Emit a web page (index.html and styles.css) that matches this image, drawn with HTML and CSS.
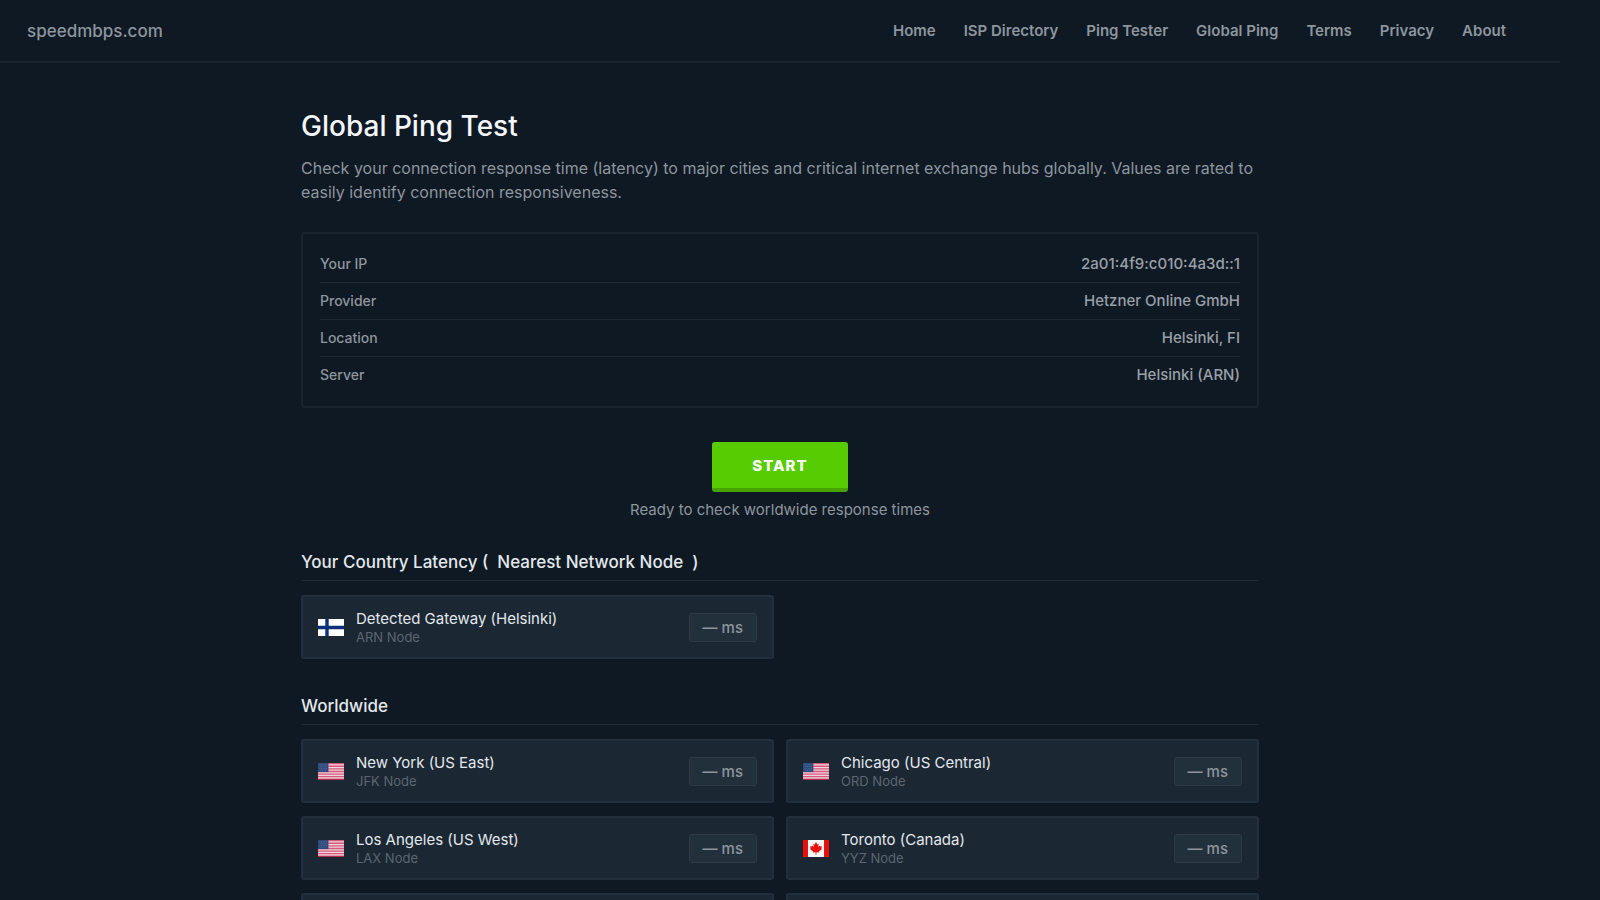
FILE: index.html
```html
<!DOCTYPE html>
<html lang="en">
<head>
  <meta charset="UTF-8">
  <meta name="viewport" content="width=device-width, initial-scale=1.0">
  <title>Global Ping Test</title>
  <link rel="stylesheet" href="styles.css">
</head>
<body>
  <!-- flag shapes, reused by the cards -->
  <svg class="sprite" aria-hidden="true">
    <symbol id="flag-fi" viewBox="0 0 26 17">
      <rect width="26" height="17" fill="#fff"/>
      <path d="M0 8.5h26M9 0v17" stroke="#0b2f78" stroke-width="3.4"/>
    </symbol>
    <symbol id="flag-us" viewBox="0 0 26 17">
      <rect width="26" height="17" fill="#f3d3dd"/>
      <path d="M0 .65h26M0 3.25h26M0 5.85h26M0 8.5h26M0 11.1h26M0 13.7h26" stroke="#d4597a" stroke-width="1.3"/>
      <path d="M0 16.35h26" stroke="#b02a4c" stroke-width="1.3"/>
      <rect width="10.4" height="9.1" fill="#2f4a7d"/>
      <path d="M1.5 1.8h8M2.5 3.6h6M1.5 5.4h8M2.5 7.2h6" stroke="#6f86b0" stroke-width=".7" stroke-dasharray=".7 1"/>
    </symbol>
    <symbol id="flag-ca" viewBox="0 0 26 17">
      <rect width="26" height="17" fill="#fff"/>
      <path d="M0 0h5v17H0zM21 0h5v17h-5z" fill="#e8110f"/>
      <path d="M13 2l1.3 2.4 1.4-.7-.5 3.4 1.7-1.6.4 1 1.7-.2-.7 2 .8.6-3.2 2.5.3 1.2-2.8-.4V15h-.8v-2.8l-2.8.4.3-1.2-3.2-2.5.8-.6-.7-2 1.7.2.4-1 1.7 1.6-.5-3.4 1.4.7z" fill="#e8110f"/>
    </symbol>
  </svg>

  <header class="header">
    <a class="logo" href="#">speedmbps.com</a>
    <nav class="nav">
      <a href="#">Home</a>
      <a href="#">ISP Directory</a>
      <a href="#">Ping Tester</a>
      <a href="#">Global Ping</a>
      <a href="#">Terms</a>
      <a href="#">Privacy</a>
      <a href="#">About</a>
    </nav>
  </header>

  <main class="container">
    <h1>Global Ping Test</h1>
    <p class="intro">Check your connection response time (latency) to major cities and critical internet exchange hubs globally. Values are rated to easily identify connection responsiveness.</p>

    <dl class="info">
      <div class="info-row"><dt>Your IP</dt><dd>2a01:4f9:c010:4a3d::1</dd></div>
      <div class="info-row"><dt>Provider</dt><dd>Hetzner Online GmbH</dd></div>
      <div class="info-row"><dt>Location</dt><dd>Helsinki, FI</dd></div>
      <div class="info-row"><dt>Server</dt><dd>Helsinki (ARN)</dd></div>
    </dl>

    <div class="actions">
      <button class="start" type="button">START</button>
      <p class="status">Ready to check worldwide response times</p>
    </div>

    <section>
      <h2>Your Country Latency (&nbsp; Nearest Network Node &nbsp;)</h2>
      <div class="grid">
        <div class="card">
          <svg class="flag"><use href="#flag-fi"/></svg>
          <div class="place"><h3>Detected Gateway (Helsinki)</h3><p>ARN Node</p></div>
          <span class="ping">— ms</span>
        </div>
      </div>
    </section>

    <section>
      <h2>Worldwide</h2>
      <div class="grid">
        <div class="card">
          <svg class="flag"><use href="#flag-us"/></svg>
          <div class="place"><h3>New York (US East)</h3><p>JFK Node</p></div>
          <span class="ping">— ms</span>
        </div>
        <div class="card">
          <svg class="flag"><use href="#flag-us"/></svg>
          <div class="place"><h3>Chicago (US Central)</h3><p>ORD Node</p></div>
          <span class="ping">— ms</span>
        </div>
        <div class="card">
          <svg class="flag"><use href="#flag-us"/></svg>
          <div class="place"><h3>Los Angeles (US West)</h3><p>LAX Node</p></div>
          <span class="ping">— ms</span>
        </div>
        <div class="card">
          <svg class="flag"><use href="#flag-ca"/></svg>
          <div class="place"><h3>Toronto (Canada)</h3><p>YYZ Node</p></div>
          <span class="ping">— ms</span>
        </div>
        <div class="card"></div>
        <div class="card"></div>
      </div>
    </section>
  </main>
</body>
</html>
```
FILE: styles.css
```css
*{
  box-sizing: border-box;
  margin: 0;
  padding: 0;
}
body{
  background: #0f1923;
  color: #8d959e;
  font-family: Inter, "Liberation Sans", sans-serif;
  padding-right: 40px;
}
a{
  color: inherit;
  text-decoration: none;
}
.sprite{
  display: none;
}
.header{
  display: flex;
  justify-content: space-between;
  align-items: center;
  height: 63px;
  padding: 0 54px 0 27px;
  border-bottom: 2px solid #1a242e;
}
.logo{
  font-size: 17px;
  font-weight: 500;
}
.nav{
  display: flex;
  gap: 28px;
  font-size: 15px;
  font-weight: 600;
}
.container{
  max-width: 958px;
  margin: 0 auto;
  padding: 44px 0 40px;
}
h1{
  color: #f3f6fa;
  font-size: 28px;
  font-weight: 500;
  line-height: 38px;
  margin-bottom: 11px;
}
.intro{
  font-size: 16px;
  line-height: 24px;
  margin-bottom: 28px;
}
.info{
  border: 2px solid #1a242e;
  border-radius: 4px;
  padding: 12px 17px;
  margin-bottom: 34px;
}
.info-row{
  display: flex;
  justify-content: space-between;
  align-items: center;
  height: 37px;
  padding-bottom: 2px;
  border-bottom: 1px solid #1e2933;
}
.info-row:last-child{
  border-bottom: 0;
}
dt{
  font-size: 14px;
  font-weight: 500;
}
dd{
  color: #99a0a8;
  font-size: 15px;
  font-weight: 500;
}
.actions{
  display: flex;
  flex-direction: column;
  align-items: center;
  gap: 8px;
  margin-bottom: 30px;
}
.start{
  width: 136px;
  height: 50px;
  border: 0;
  border-bottom: 4px solid #46a302;
  border-radius: 3px;
  background: #58cc02;
  color: #fff;
  font-family: inherit;
  font-size: 15px;
  font-weight: 800;
  letter-spacing: 1px;
}
.status{
  font-size: 15px;
  line-height: 20px;
}
section{
  margin-bottom: 35px;
}
h2{
  color: #e3e8ed;
  font-size: 17px;
  font-weight: 500;
  line-height: 24px;
  padding-bottom: 6px;
  margin-bottom: 14px;
  border-bottom: 1px solid #202b35;
}
.grid{
  display: grid;
  grid-template-columns: 1fr 1fr;
  gap: 13px 12px;
}
.card{
  display: flex;
  align-items: center;
  gap: 12px;
  min-height: 64px;
  padding: 0 15px;
  background: #1b2733;
  border: 2px solid #232f3a;
  border-radius: 3px;
}
.flag{
  width: 26px;
  height: 17px;
}
.place{
  flex: 1;
}
h3{
  color: #e3e8ed;
  font-size: 15px;
  font-weight: 400;
  line-height: 19px;
}
.place p{
  color: #5c6670;
  font-size: 13px;
  line-height: 18px;
}
.ping{
  padding: 0 13px;
  background: #22303b;
  border: 1px solid #2e3a45;
  border-radius: 3px;
  font-size: 15px;
  font-weight: 500;
  line-height: 27px;
}
```
